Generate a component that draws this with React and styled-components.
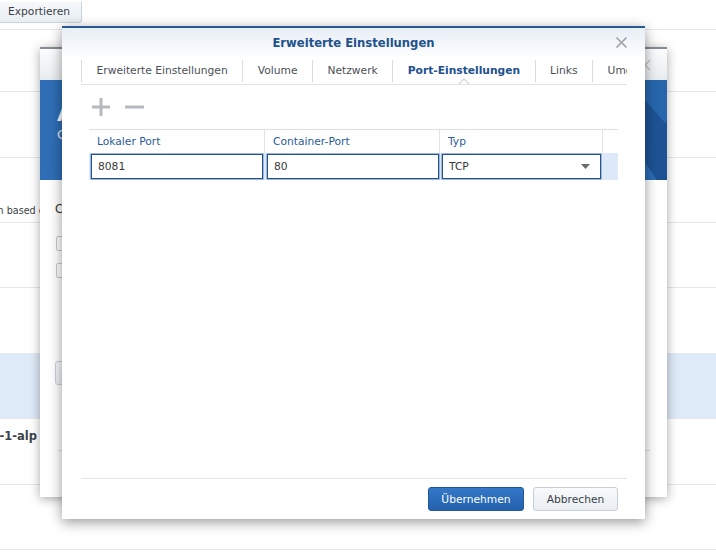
import React from 'react';
import styled, { createGlobalStyle } from 'styled-components';

const Global = createGlobalStyle`
  body {
    margin: 0;
    background: #fff;
  }
  * { box-sizing: border-box; }
`;

const Page = styled.div`
  position: relative;
  width: 716px;
  height: 554px;
  overflow: hidden;
  background: #fff;
  font-family: "DejaVu Sans", Verdana, sans-serif;
  color: #333;
`;

/* ---------- background list ---------- */

const TopBar = styled.div`
  height: 30px;
  border-bottom: 1px solid #e4e8ec;
`;

const ExportButton = styled.button`
  height: 21px;
  width: 82px;
  padding: 0 0 0 8px;
  text-align: left;
  border: 1px solid #c9d3dd;
  border-top: none;
  border-left: none;
  border-radius: 0 0 3px 0;
  background: linear-gradient(#f6f9fb, #e9eff5);
  font-family: inherit;
  font-size: 10.7px;
  color: #3a3f45;
`;

const Row = styled.div`
  height: ${p => p.h}px;
  border-bottom: 1px solid #e4e8ec;
  background: ${p => (p.selected ? '#dfeaf8' : '#fff')};
  display: flex;
  align-items: ${p => p.align || 'center'};
  padding: ${p => p.pad || '0'};
`;

const ClipCell = styled.div`
  width: ${p => p.w || 44}px;
  overflow: hidden;
  display: flex;
  justify-content: flex-end;
  white-space: nowrap;
  font-size: 9.6px;
  color: #3a3f45;
`;

const NameCell = styled(ClipCell)`
  font-weight: bold;
  font-size: 11.5px;
  color: #3d434a;
`;

/* ---------- back dialog ---------- */

const BackDialog = styled.div`
  position: absolute;
  left: 40px;
  top: 47px;
  width: 627px;
  height: 450px;
  background: #fff;
  border-top: 2px solid #858c94;
  box-shadow: 0 2px 10px rgba(0, 0, 0, 0.35);
  display: flex;
  flex-direction: column;
`;

const BackHeader = styled.div`
  height: 31px;
  background: linear-gradient(#fbfcfd, #e9ecef);
  display: flex;
  justify-content: flex-end;
  align-items: center;
  padding-right: 16px;
`;

const Banner = styled.div`
  position: relative;
  height: 100px;
  background: linear-gradient(100deg, #2f6eb6, #215ea5);
  padding: 22px 0 0 17px;
  color: #fff;
  overflow: hidden;
`;

const BannerTitle = styled.div`
  font-size: 20px;
  font-weight: bold;
  line-height: 24px;
`;

const BannerSub = styled.div`
  font-size: 13px;
  line-height: 18px;
  opacity: 0.85;
`;

const BannerArt = styled.svg`
  position: absolute;
  right: 0;
  top: 0;
`;

const BackBody = styled.div`
  flex: 1;
  display: flex;
  flex-direction: column;
  padding: 22px 17px 0 15px;
`;

const BackText = styled.div`
  font-size: 11.5px;
  color: #333;
  height: 28px;
`;

const CheckLine = styled.div`
  height: 27px;
  display: flex;
  align-items: center;
  padding-left: 1px;
  &:first-of-type { margin-top: 7px; }
`;

const Check = styled.span`
  width: 15px;
  height: 15px;
  border: 1px solid #c3cad2;
  border-radius: 2px;
  background: #fff;
`;

const BackButton = styled.div`
  margin-top: 77px;
  width: 80px;
  height: 24px;
  border: 1px solid #c8d1da;
  border-radius: 3px;
  background: linear-gradient(#f8fafc, #eaeff4);
`;

const BackRule = styled.div`
  margin-top: 65px;
  margin-left: 3px;
  border-top: 1px solid #dfe3e7;
`;

/* ---------- front dialog ---------- */

const Dialog = styled.div`
  position: absolute;
  left: 62px;
  top: 26px;
  width: 583px;
  height: 493px;
  background: #fff;
  border-top: 2px solid #295892;
  box-shadow: 0 3px 12px rgba(0, 0, 0, 0.42);
  display: flex;
  flex-direction: column;
`;

const Header = styled.div`
  position: relative;
  height: 29px;
  flex-shrink: 0;
  background: linear-gradient(#e8eef5, #fdfeff);
  display: flex;
  align-items: center;
  justify-content: center;
`;

const Title = styled.div`
  font-size: 11.6px;
  font-weight: bold;
  color: #22518d;
  padding-top: 1px;
`;

const CloseButton = styled.span`
  position: absolute;
  right: 17px;
  top: 8px;
  width: 13px;
  height: 13px;
  display: flex;
`;

const TabBar = styled.div`
  flex-shrink: 0;
  margin: 0 18px 0 19px;
  height: 28px;
  border-bottom: 1px solid #dfe3e8;
  display: flex;
  align-items: center;
  overflow: hidden;
`;

const Separator = styled.span`
  flex-shrink: 0;
  width: 1px;
  height: 22px;
  background: #d6dde5;
`;

const Tab = styled.div`
  position: relative;
  align-self: stretch;
  display: flex;
  align-items: center;
  padding: 0 14.5px;
  white-space: nowrap;
  font-size: 10.7px;
  color: ${p => (p.active ? '#22518d' : '#4b5057')};
  font-weight: ${p => (p.active ? 'bold' : 'normal')};
`;

const Notch = styled.span`
  position: absolute;
  left: 50%;
  bottom: 0;
  margin-left: -6px;
  width: 0;
  height: 0;
  border-left: 6px solid transparent;
  border-right: 6px solid transparent;
  border-bottom: 6px solid #d3d8de;
  &::after {
    content: '';
    position: absolute;
    left: -5px;
    top: 1.5px;
    border-left: 5px solid transparent;
    border-right: 5px solid transparent;
    border-bottom: 5px solid #fff;
  }
`;

const Body = styled.div`
  flex: 1;
  display: flex;
  flex-direction: column;
  padding: 0 27px 0 27px;
`;

const Toolbar = styled.div`
  height: 44px;
  display: flex;
  align-items: center;
  gap: 14px;
  padding: 0 0 0 2px;
`;

const ToolIcon = styled.svg`
  display: block;
`;

const GridHead = styled.div`
  display: grid;
  grid-template-columns: 176px 175px 163px 1fr;
  height: 24px;
  border-top: 1px solid #d9e0e8;
`;

const HeadCell = styled.div`
  display: flex;
  align-items: center;
  padding-left: 8px;
  font-size: 10.7px;
  color: #2b5c98;
  border-right: ${p => (p.last ? 'none' : '1px solid #dfe5ec')};
`;

const GridRow = styled.div`
  display: grid;
  grid-template-columns: 176px 175px 163px 1fr;
  height: 27px;
  background: #dde9f8;
`;

const Cell = styled.div`
  padding: 1px ${p => p.right || 2}px 1px 2px;
`;

const Field = styled.input`
  width: 100%;
  height: 25px;
  border: 1px solid #24548f;
  box-shadow: 0 0 0 0.6px rgba(36, 84, 143, 0.55);
  background: #fff;
  padding: 0 0 0 6px;
  font-family: inherit;
  font-size: 10.7px;
  color: #3a3a3a;
  outline: none;
`;

const Combo = styled.div`
  height: 25px;
  border: 1px solid #24548f;
  box-shadow: 0 0 0 0.6px rgba(36, 84, 143, 0.55);
  background: #fff;
  display: flex;
  align-items: center;
  justify-content: space-between;
  padding: 0 10px 0 6px;
  font-size: 10.7px;
  color: #3a3a3a;
`;

const Footer = styled.div`
  flex-shrink: 0;
  margin: 0 18px 0 19px;
  border-top: 1px solid #e2e4e6;
  padding: 8px 9px 8px 0;
  display: flex;
  justify-content: flex-end;
  gap: 9px;
`;

const Button = styled.button`
  height: 24px;
  min-width: ${p => p.w}px;
  border-radius: 3px;
  font-family: inherit;
  font-size: 10.7px;
  padding: 0 12px;
  border: 1px solid ${p => (p.primary ? '#1e559c' : '#c6cfd9')};
  background: ${p =>
    p.primary
      ? 'linear-gradient(#3378c8, #2461ad)'
      : 'linear-gradient(#f8fafc, #e9eef3)'};
  color: ${p => (p.primary ? '#fff' : '#3a3f45')};
`;

const tabs = ['Erweiterte Einstellungen', 'Volume', 'Netzwerk', 'Port-Einstellungen', 'Links', 'Umgebung'];

// heights include the bottom border (border-box)
const rows = [
  { h: 62 },
  { h: 66 },
  { h: 65, align: 'flex-end', pad: '0 0 6px 0', text: 'Debian based c', w: 44 },
  { h: 65 },
  { h: 66 },
  { h: 65, selected: true },
  { h: 66, align: 'flex-start', pad: '10px 0 0 0', name: 'nginx-1-alp', w: 37 },
  { h: 65 },
];

function Background() {
  return (
    <>
      <TopBar>
        <ExportButton>Exportieren</ExportButton>
      </TopBar>
      {rows.map((r, i) => (
        <Row key={i} h={r.h} align={r.align} pad={r.pad} selected={r.selected}>
          {r.text && <ClipCell w={r.w}>{r.text}</ClipCell>}
          {r.name && <NameCell w={r.w}>{r.name}</NameCell>}
        </Row>
      ))}
    </>
  );
}

function BackWindow() {
  return (
    <BackDialog>
      <BackHeader>
        <svg width="12" height="12" viewBox="0 0 12 12">
          <path d="M1 1L11 11M11 1L1 11" stroke="#c3c7cb" strokeWidth="1.5" />
        </svg>
      </BackHeader>
      <Banner>
        <BannerTitle>Abbild erstellen</BannerTitle>
        <BannerSub>Container-Einstellungen</BannerSub>
        <BannerArt width="120" height="100" viewBox="0 0 120 100">
          <polygon points="60,0 120,0 120,40 95,100 40,100" fill="#2766ad" />
          <polygon points="98,20 120,45 120,100 96,100" fill="#1b4f8f" opacity="0.8" />
          <polygon points="80,55 110,100 70,100" fill="#2a6bb4" />
        </BannerArt>
      </Banner>
      <BackBody>
        <BackText>Containername</BackText>
        <CheckLine><Check /></CheckLine>
        <CheckLine><Check /></CheckLine>
        <BackButton />
        <BackRule />
      </BackBody>
    </BackDialog>
  );
}

export default function App() {
  return (
    <Page>
      <Global />
      <Background />
      <BackWindow />
      <Dialog>
        <Header>
          <Title>Erweiterte Einstellungen</Title>
          <CloseButton>
            <svg width="13" height="13" viewBox="0 0 13 13">
              <path d="M1.5 1.5L11.5 11.5M11.5 1.5L1.5 11.5" stroke="#9ba1a7" strokeWidth="1.6" />
            </svg>
          </CloseButton>
        </Header>
        <TabBar>
          <Separator />
          {tabs.map((t, i) => (
            <React.Fragment key={t}>
              <Tab active={i === 3}>
                {t}
                {i === 3 && <Notch />}
              </Tab>
              {i < tabs.length - 1 && <Separator />}
            </React.Fragment>
          ))}
        </TabBar>
        <Body>
          <Toolbar>
            <ToolIcon width="20" height="20" viewBox="0 0 20 20">
              <path d="M10 1V19M1 10H19" stroke="#b6babf" strokeWidth="3" />
            </ToolIcon>
            <ToolIcon width="19" height="20" viewBox="0 0 19 20">
              <path d="M0 10H19" stroke="#b6babf" strokeWidth="3" />
            </ToolIcon>
          </Toolbar>
          <GridHead>
            <HeadCell>Lokaler Port</HeadCell>
            <HeadCell>Container-Port</HeadCell>
            <HeadCell>Typ</HeadCell>
            <HeadCell last />
          </GridHead>
          <GridRow>
            <Cell>
              <Field value="8081" readOnly />
            </Cell>
            <Cell right={1}>
              <Field value="80" readOnly />
            </Cell>
            <Cell>
              <Combo>
                TCP
                <svg width="9" height="5" viewBox="0 0 9 5">
                  <path d="M0 0H9L4.5 5Z" fill="#666b70" />
                </svg>
              </Combo>
            </Cell>
            <Cell />
          </GridRow>
        </Body>
        <Footer>
          <Button primary w={96}>Übernehmen</Button>
          <Button w={85}>Abbrechen</Button>
        </Footer>
      </Dialog>
    </Page>
  );
}
